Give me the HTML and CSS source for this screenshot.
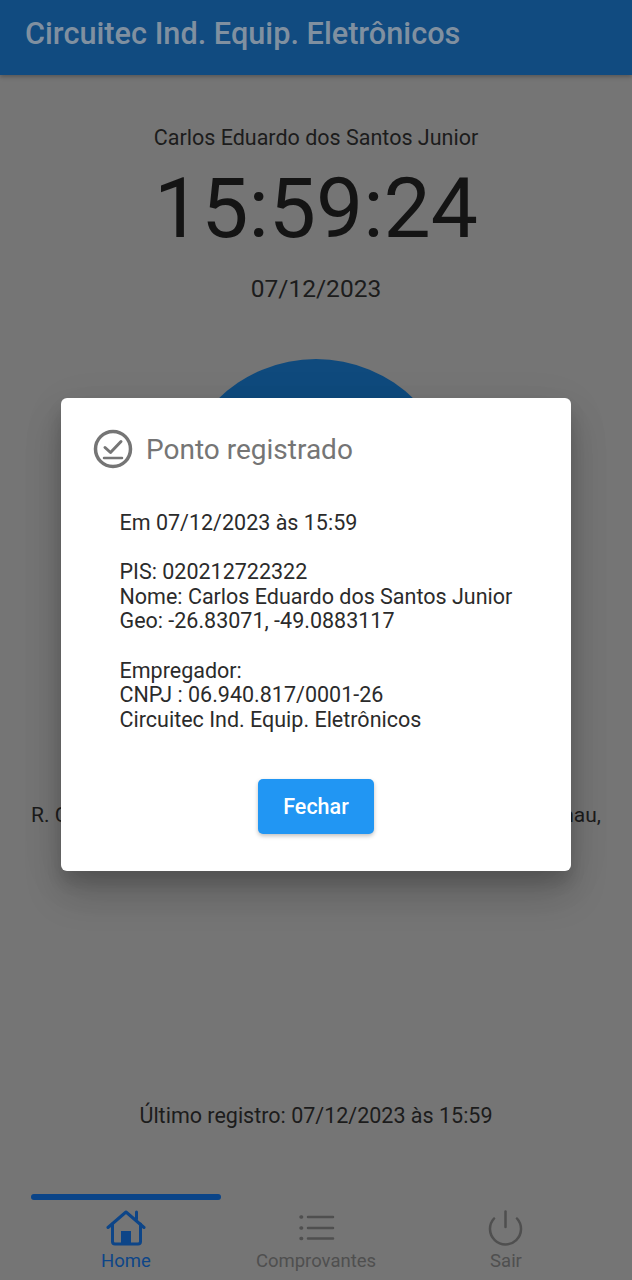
FILE: index.html
```html
<!DOCTYPE html>
<html lang="en">
<head>
    <meta charset="UTF-8">
    <meta name="viewport" content="width=device-width, initial-scale=1.0">
    <title>Ponto</title>
    <link rel="stylesheet" href="styles.css">
</head>
<body>
    <div class="page">
        <header class="app-bar">Circuitec Ind. Equip. Eletrônicos</header>

        <main class="home">
            <div class="home-name">Carlos Eduardo dos Santos Junior</div>
            <div class="home-clock">15:59:24</div>
            <div class="home-date">07/12/2023</div>
            <div class="punch-btn"></div>
            <!-- middle of the address sits behind the dialog -->
            <div class="home-address"><span>R. C</span><span>nau,</span></div>
            <div class="home-last">Último registro: 07/12/2023 às 15:59</div>
        </main>

        <nav class="tabs">
            <div class="tab tab-active">
                <span class="tab-line"></span>
                <svg class="tab-icon" viewBox="0 0 40 36" fill="none" stroke="currentColor" stroke-width="3" stroke-linecap="round" stroke-linejoin="round">
                    <path d="M2 17.5 20 2l18 15.5"/>
                    <path d="M30.5 9V2"/>
                    <path d="M6.500 14v17.500a2.500 2.500 0 0 0 2.500 2.500h23a2.500 2.500 0 0 0 2.500-2.500V14"/>
                    <rect x="15" y="21" width="10" height="13" fill="currentColor" stroke="none"/>
                </svg>
                <span class="tab-label">Home</span>
            </div>
            <div class="tab">
                <svg class="tab-icon" viewBox="0 0 40 36" fill="none" stroke="currentColor" stroke-width="2.500" stroke-linecap="round">
                    <path d="M12 7h25M12 18h25M12 28.500h25"/>
                    <path d="M5 7h.6M5 18h.6M5 28.500h.6" stroke-width="3.500"/>
                </svg>
                <span class="tab-label">Comprovantes</span>
            </div>
            <div class="tab">
                <svg class="tab-icon" viewBox="0 0 40 36" fill="none" stroke="currentColor" stroke-width="2.500" stroke-linecap="round">
                    <path d="M19.500 1.500V17"/>
                    <path d="M8 8.500a15.500 15.500 0 1 0 23 0"/>
                </svg>
                <span class="tab-label">Sair</span>
            </div>
        </nav>

        <div class="modal-wrap">
            <div class="modal">
                <div class="modal-title">
                    <svg class="modal-icon" viewBox="0 0 40 40" fill="none" stroke="currentColor" stroke-width="3.500" stroke-linecap="round" stroke-linejoin="round">
                        <circle cx="20" cy="20" r="17.500"/>
                        <path d="M12 18.500l5.500 5 10.500-11" stroke-width="3"/>
                        <path d="M11 29h18" stroke-width="2.500"/>
                    </svg>
                    <span>Ponto registrado</span>
                </div>
                <div class="modal-body">
                    <p>Em 07/12/2023 às 15:59</p>
                    <p>PIS: 020212722322<br>Nome: Carlos Eduardo dos Santos Junior<br>Geo: -26.83071, -49.0883117</p>
                    <p>Empregador:<br>CNPJ : 06.940.817/0001-26<br>Circuitec Ind. Equip. Eletrônicos</p>
                </div>
                <div class="modal-actions">
                    <button type="button" class="close-btn">Fechar</button>
                </div>
            </div>
        </div>
    </div>
</body>
</html>
```

FILE: styles.css
```css
* {
    box-sizing: border-box;
}
body {
    margin: 0;
    font-family: Roboto, "Liberation Sans", sans-serif;
    background-color: #757575;
}
.page {
    position: relative;
    display: flex;
    flex-direction: column;
    height: 1280px;
    overflow: hidden;
}
.app-bar {
    height: 75px;
    padding: 16px 25px 0;
    font-size: 30.700px;
    line-height: 36px;
    font-weight: 500;
    color: #8090a0;
    background-color: #114b80;
    box-shadow: 0 2px 4px rgba(0, 0, 0, 0.25);
}
.home {
    display: flex;
    flex-direction: column;
    align-items: center;
    padding-top: 50px;
    color: #1c1c1c;
}
.home-name {
    font-size: 21.500px;
    line-height: 26px;
}
.home-clock {
    margin-top: 8px;
    font-size: 84px;
    line-height: 100px;
    font-weight: 400;
    color: #141414;
}
.home-date {
    margin-top: 16px;
    font-size: 24.500px;
    line-height: 28px;
}
.punch-btn {
    width: 280px;
    height: 280px;
    margin-top: 56px;
    border-radius: 50%;
    background-color: #0f4a7d;
}
.home-address {
    display: flex;
    justify-content: space-between;
    width: 570px;
    margin-top: 163px;
    font-size: 21px;
    line-height: 26px;
}
.home-last {
    margin-top: 275px;
    font-size: 21.500px;
    line-height: 26px;
}
.tabs {
    display: flex;
    margin-top: auto;
    padding: 0 31px;
    height: 86px;
    color: #4f4f4f;
}
.tab {
    display: flex;
    flex-direction: column;
    align-items: center;
    flex: 1;
    padding-top: 16px;
    position: relative;
}
.tab-active {
    color: #0d4588;
}
.tab-line {
    position: absolute;
    top: 0;
    left: 0;
    right: 0;
    height: 6px;
    border-radius: 3px;
    background-color: #0a4488;
}
.tab-icon {
    width: 40px;
    height: 36px;
}
.tab-label {
    margin-top: 3px;
    font-size: 18.500px;
    line-height: 24px;
}
.modal-wrap {
    position: absolute;
    top: 398px;
    left: 61px;
}
.modal {
    width: 510px;
    height: 473px;
    padding: 32px 32px 0;
    border-radius: 6px;
    background: white;
    box-shadow: 0 24px 38px rgba(0, 0, 0, 0.16), 0 9px 46px rgba(0, 0, 0, 0.07), 0 11px 15px rgba(0, 0, 0, 0.12);
}
.modal-title {
    display: flex;
    align-items: center;
    gap: 13px;
    height: 38px;
    font-size: 28px;
    color: #757575;
}
.modal-icon {
    width: 40px;
    height: 40px;
    flex: none;
}
.modal-body {
    margin-top: 43px;
    padding-left: 26.500px;
    font-size: 21.500px;
    line-height: 24.600px;
    color: #2b2b2b;
}
.modal-body p {
    margin: 0 0 24.600px;
}
.modal-actions {
    display: flex;
    justify-content: center;
    margin-top: 47px;
}
.close-btn {
    width: 116px;
    height: 55px;
    border: none;
    border-radius: 5px;
    font-family: inherit;
    font-size: 21.500px;
    font-weight: 500;
    color: white;
    background-color: #2196f3;
    box-shadow: 0 2px 4px rgba(0, 0, 0, 0.25);
}
```
